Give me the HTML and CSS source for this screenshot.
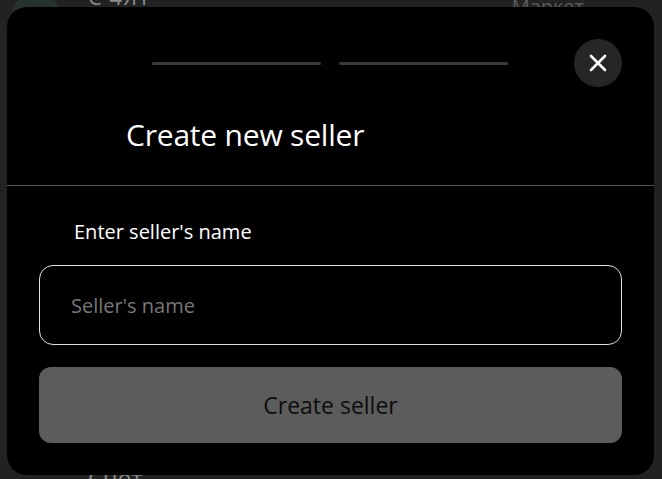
FILE: index.html
```html
<!DOCTYPE html>
<html lang="en">
<head>
<meta charset="utf-8">
<title>Create new seller</title>
<link rel="stylesheet" href="styles.css">
</head>
<body>
<div class="page">
  <div class="bg-header">
    <div class="avatar"></div>
    <div class="bg-title">С 4ЯТ</div>
    <div class="bg-right">Маркет</div>
  </div>
  <div class="bg-footer">Счёт</div>

  <div class="modal">
    <div class="modal-top">
      <div class="steps">
        <span class="step"></span>
        <span class="step"></span>
      </div>
      <button class="close" aria-label="Close">
        <svg width="18" height="18" viewBox="0 0 18 18"><path d="M2 2L16 16M16 2L2 16" stroke="#fff" stroke-width="2.6" stroke-linecap="round"/></svg>
      </button>
    </div>
    <h1 class="title">Create new seller</h1>
    <div class="divider"></div>
    <div class="form">
      <label class="label" for="name">Enter seller's name</label>
      <input id="name" class="input" type="text" placeholder="Seller's name">
      <button class="submit">Create seller</button>
    </div>
  </div>
</div>
</body>
</html>
```
FILE: styles.css
```css
* { box-sizing: border-box; }
html, body { margin: 0; padding: 0; }
body {
  background: #222222;
  font-family: "Open Sans", "Noto Sans", sans-serif;
  width: 662px;
  height: 479px;
  overflow: hidden;
}
.page {
  position: relative;
  width: 662px;
  height: 479px;
}
.bg-header {
  display: flex;
  align-items: flex-start;
  height: 40px;
  padding: 0 0 0 12px;
  position: relative;
}
.avatar {
  width: 48px;
  height: 48px;
  border-radius: 50%;
  background: #25332d;
  margin-top: -8px;
  flex: none;
}
.bg-title {
  margin-left: 28px;
  margin-top: -19px;
  font-size: 22px;
  color: #8a8a8a;
  letter-spacing: 1px;
}
.bg-right {
  margin-left: auto;
  margin-right: 78px;
  margin-top: -7px;
  font-size: 20px;
  color: #5a5a5a;
}
.bg-footer {
  position: absolute;
  left: 88px;
  top: 461px;
  font-size: 24px;
  color: #8a8a8a;
}
.modal {
  position: absolute;
  left: 7px;
  top: 7px;
  width: 647px;
  height: 468px;
  background: #000;
  border-radius: 20px;
}
.modal-top {
  position: relative;
  height: 80px;
}
.steps {
  display: flex;
  gap: 18px;
  position: absolute;
  left: 145px;
  top: 55px;
}
.step {
  display: block;
  width: 169px;
  height: 3px;
  border-radius: 2px;
  background: #3b3b3b;
}
.close {
  position: absolute;
  left: 567px;
  top: 32px;
  width: 48px;
  height: 48px;
  border-radius: 50%;
  background: #262626;
  border: none;
  padding: 0;
  display: flex;
  align-items: center;
  justify-content: center;
}
.title {
  margin: 28px 0 0 119px;
  font-size: 30px;
  font-weight: 400;
  color: #fff;
  line-height: 40px;
  height: 50px;
  letter-spacing: -0.2px;
}
.divider {
  height: 1px;
  background: #555;
  margin-top: 20px;
}
.form {
  display: flex;
  flex-direction: column;
  padding: 0 32px;
}
.label {
  margin: 33px 0 0 35px;
  font-size: 20px;
  color: #fff;
  line-height: 26px;
}
.input {
  margin-top: 20px;
  height: 80px;
  border: 1px solid #e0e0e0;
  border-radius: 14px;
  background: #000;
  padding: 0 31px;
  font-family: inherit;
  font-size: 20px;
  color: #fff;
  outline: none;
}
.input::placeholder { color: #777; }
.submit {
  margin-top: 22px;
  height: 76px;
  border: none;
  border-radius: 12px;
  background: #5c5c5c;
  font-family: inherit;
  font-size: 23px;
  color: #0d0d0d;
}
```
